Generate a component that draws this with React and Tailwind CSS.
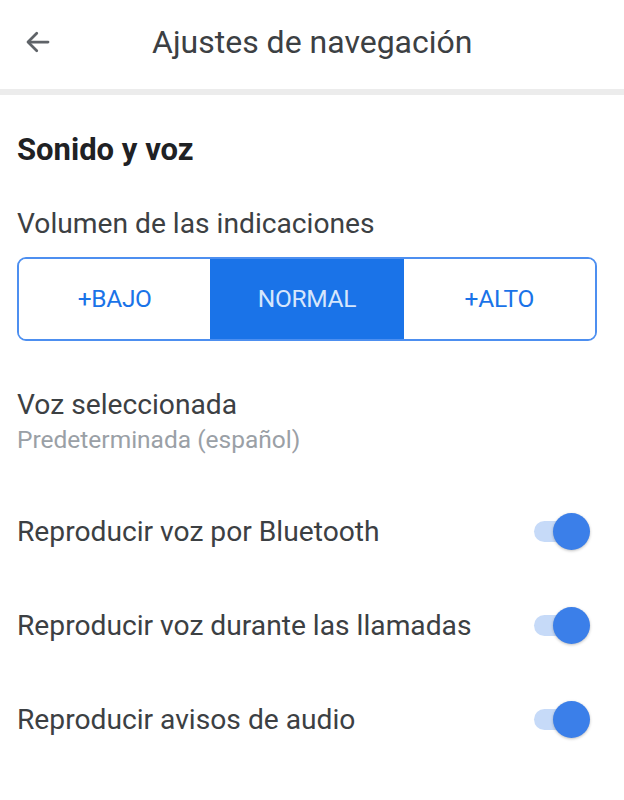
import React, { useState } from 'react';

function Toggle({ on, onChange }) {
    return (
        <button onClick={onChange} className="relative w-[58px] h-[38px] shrink-0">
            <span className={`absolute left-[1px] top-[8px] w-[52px] h-[21px] rounded-full ${on ? 'bg-[#c6daf8]' : 'bg-[#bdbdbd]'}`} />
            <span className={`absolute top-0 w-[37px] h-[37px] rounded-full shadow-[0_1px_3px_rgba(0,0,0,0.25)] ${on ? 'left-[20px] bg-[#3b7fe9]' : 'left-0 bg-[#f1f1f1]'}`} />
        </button>
    );
}

export default function App() {
    const [volume, setVolume] = useState('normal');
    const [toggles, setToggles] = useState({ bt: true, calls: true, audio: true });

    const levels = [
        { id: 'low', label: '+BAJO' },
        { id: 'normal', label: 'NORMAL' },
        { id: 'high', label: '+ALTO' },
    ];

    const rows = [
        { id: 'bt', label: 'Reproducir voz por Bluetooth' },
        { id: 'calls', label: 'Reproducir voz durante las llamadas' },
        { id: 'audio', label: 'Reproducir avisos de audio' },
    ];

    return (
        <div className="w-[624px] h-[800px] bg-white font-['Roboto',sans-serif] text-[#202124] overflow-hidden">
            {/* top bar */}
            <div className="h-[84px] flex items-center pl-[22px] pb-[5px] border-b-[6px] border-[#ececec] box-content">
                <button className="w-[32px] h-[32px] flex items-center justify-center text-[#5f6368]">
                    <svg width="30" height="30" viewBox="0 0 24 24" fill="none" stroke="currentColor" strokeWidth="2.2" strokeLinecap="round" strokeLinejoin="round">
                        <path d="M20 12H4.5" />
                        <path d="M11 5l-7 7 7 7" />
                    </svg>
                </button>
                <h1 className="ml-[98px] text-[32px] leading-[40px] text-[#3c4043]">Ajustes de navegación</h1>
            </div>

            <div className="px-[17px]">
                <h2 className="mt-[37px] text-[31px] font-bold leading-[36px] text-[#202124]">Sonido y voz</h2>
                <p className="mt-[38px] text-[28.2px] leading-[36px] text-[#3c4043]">Volumen de las indicaciones</p>

                {/* volume selector */}
                <div className="mt-[15px] w-[580px] h-[84px] flex border-2 border-[#4d8ff0] rounded-[9px] overflow-hidden">
                    {levels.map((l, i) => (
                        <button
                            key={l.id}
                            onClick={() => setVolume(l.id)}
                            className={`flex-1 flex items-center justify-center text-[24.5px] tracking-[-0.3px] ${i === 1 ? 'border-x border-[#1a73e8]' : ''} ${volume === l.id ? 'bg-[#1a73e8] text-[#d6e6fc]' : 'bg-white text-[#1a73e8]'}`}
                        >
                            {l.label}
                        </button>
                    ))}
                </div>

                <div className="mt-[46px]">
                    <p className="text-[28.2px] leading-[36px] text-[#3c4043]">Voz seleccionada</p>
                    <p className="mt-[2px] text-[24.5px] leading-[30px] text-[#9aa0a6]">Predeterminada (español)</p>
                </div>

                <div className="mt-[58px] flex flex-col gap-[56px]">
                    {rows.map(r => (
                        <div key={r.id} className="flex items-center justify-between pr-[16px]">
                            <span className="text-[28.2px] leading-[38px] text-[#3c4043]">{r.label}</span>
                            <Toggle on={toggles[r.id]} onChange={() => setToggles(t => ({ ...t, [r.id]: !t[r.id] }))} />
                        </div>
                    ))}
                </div>
            </div>
        </div>
    );
}
